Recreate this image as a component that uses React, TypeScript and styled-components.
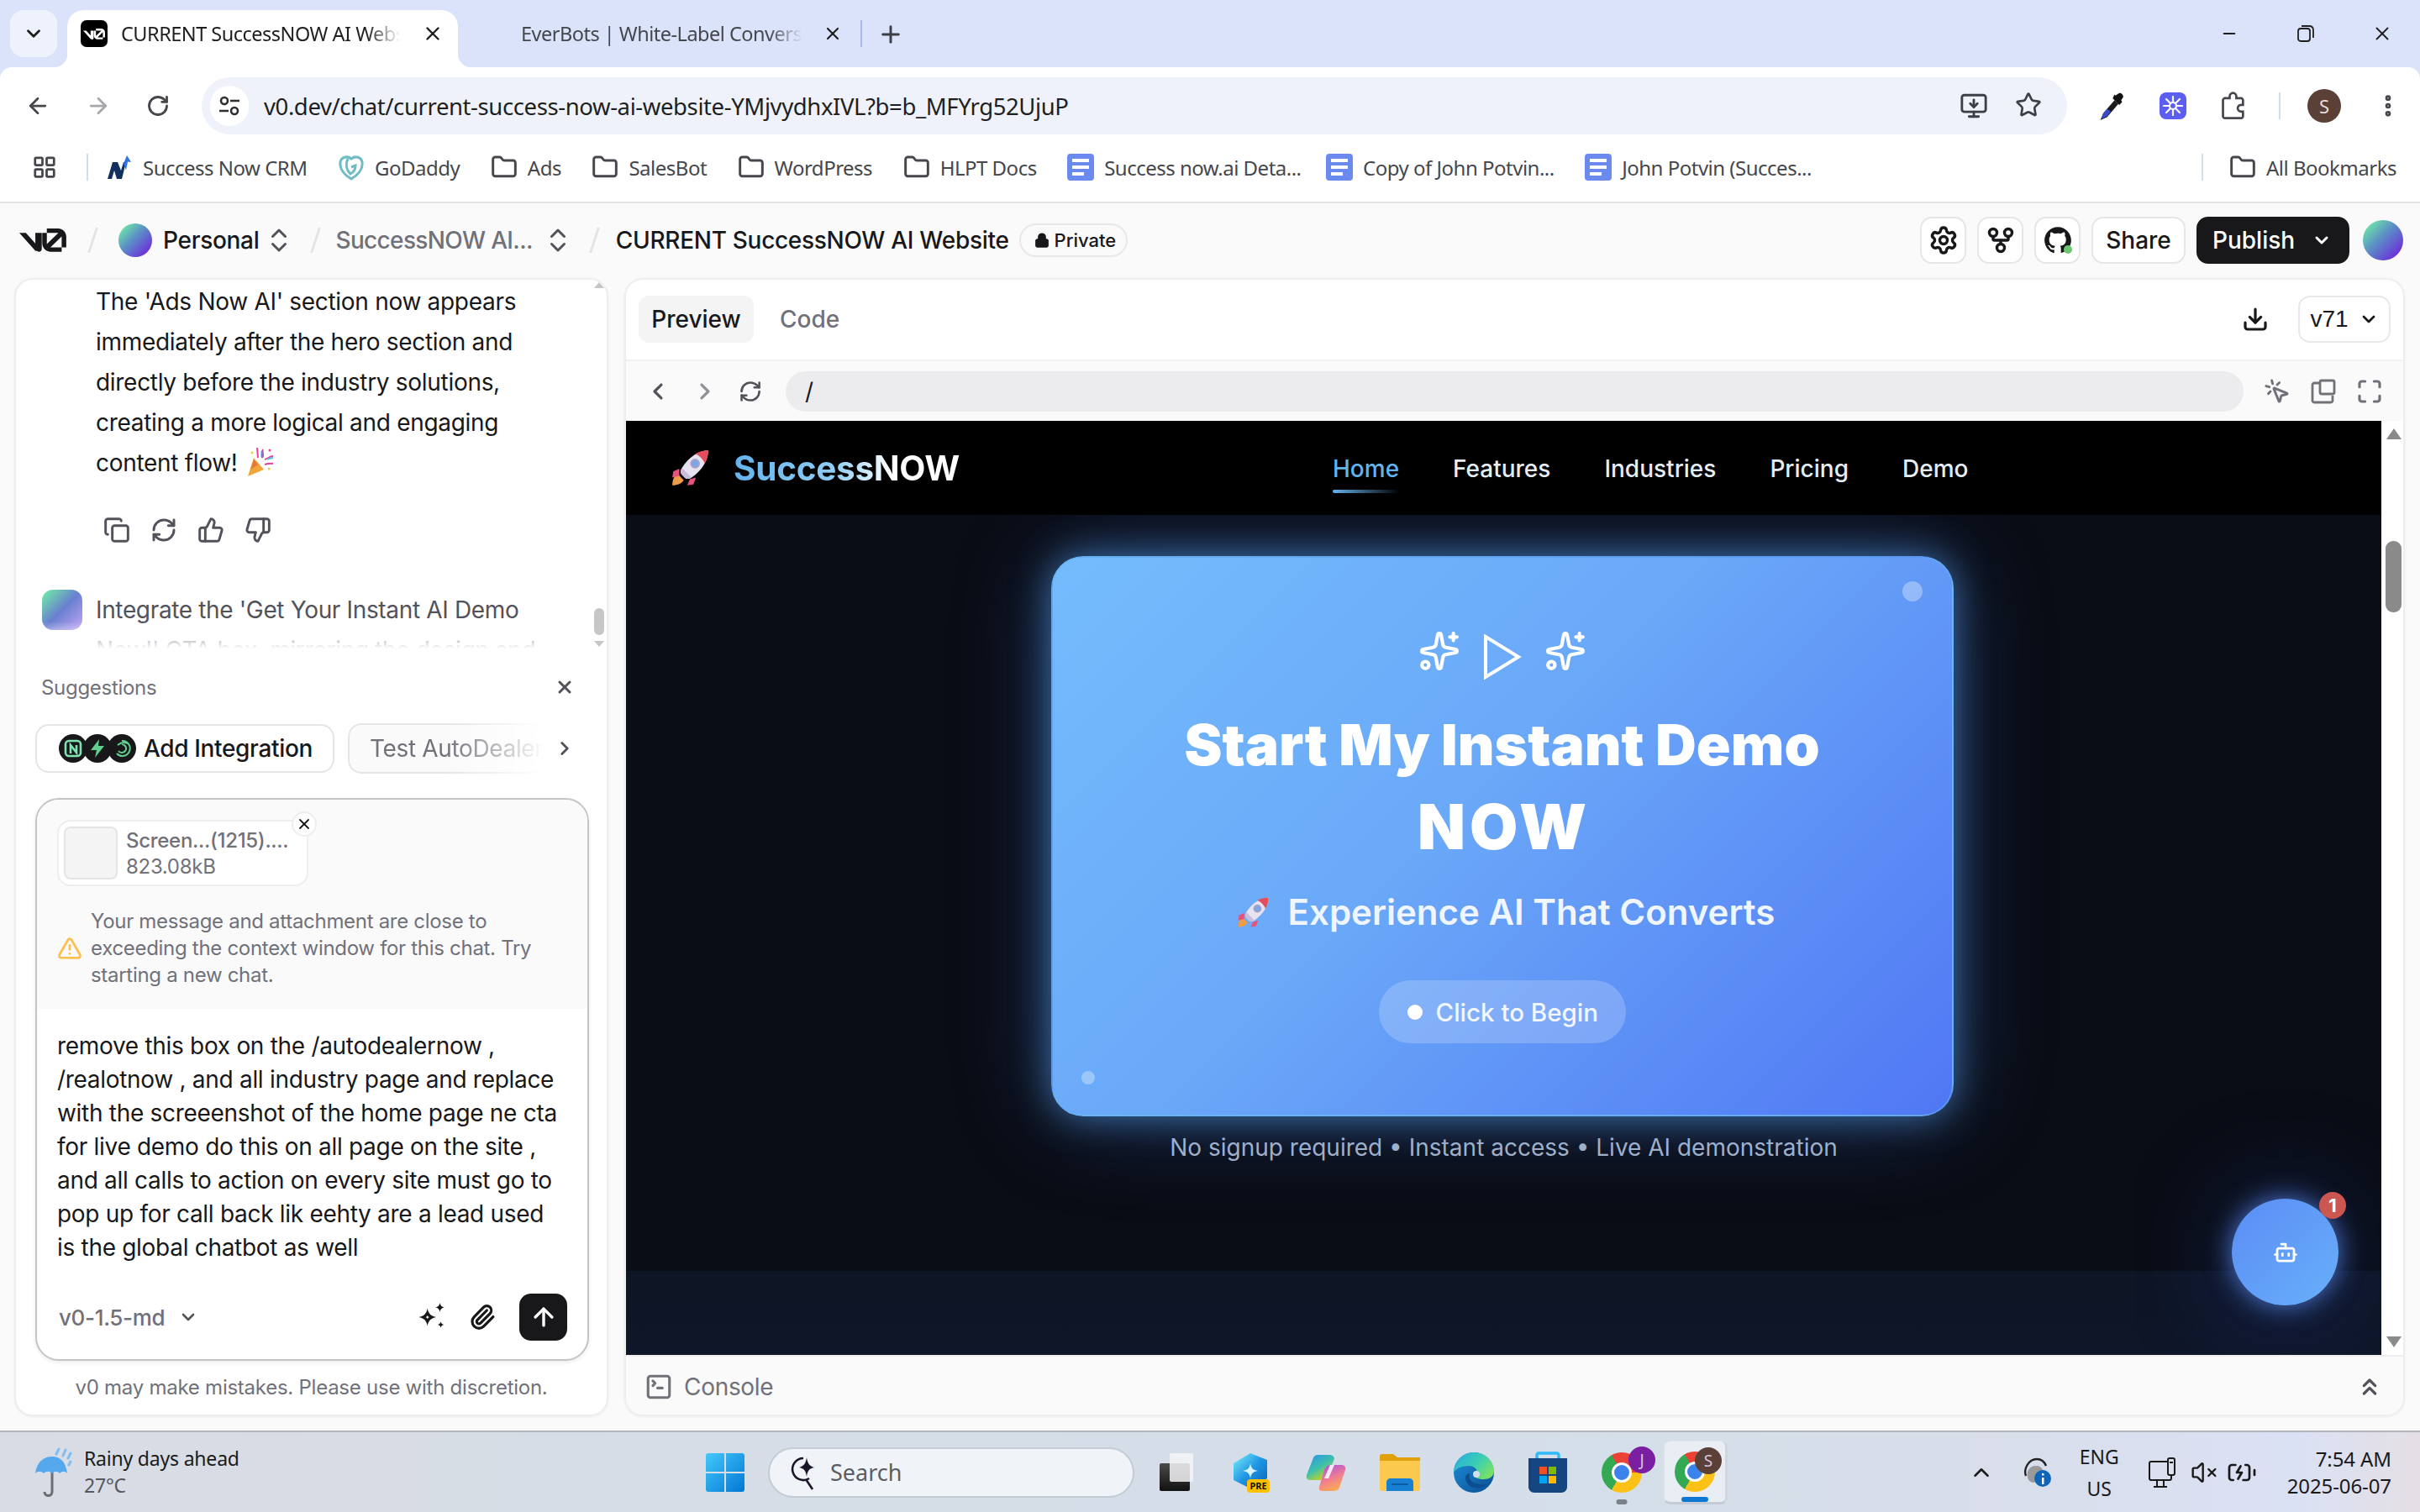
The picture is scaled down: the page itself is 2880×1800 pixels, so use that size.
import React from "react";
import styled, { createGlobalStyle } from "styled-components";
import {
  ArrowLeft, ArrowRight, ArrowUp, BatteryCharging, Bot, ChevronDown, ChevronLeft, ChevronRight, ChevronUp,
  ChevronsUp, ChevronsUpDown, Copy, Download, EllipsisVertical, Folder, GitFork, LayoutGrid, Lock, Maximize,
  Minus, MonitorDown, MousePointerClick, Paperclip, Plus, RefreshCw, RotateCw, Settings,
  Sparkles, SquareTerminal, Star, ThumbsDown, ThumbsUp, TriangleAlert, VolumeX, X,
} from "lucide-react";

const Global = createGlobalStyle`
  html, body { margin: 0; padding: 0; width: 2880px; height: 1800px; overflow: hidden; background: #fafafa; }
  * { box-sizing: border-box; }
  #root { width: 2880px; height: 1800px; }
`;

const WIN = `"Noto Sans", "Open Sans", sans-serif`;
const UI = `Inter, "Noto Sans", sans-serif`;

const Page = styled.div`
  width: 2880px;
  height: 1800px;
  display: grid;
  grid-template-rows: 80px 80px 82px 1461px 97px;
  background: #dbe3fb;
  font-family: ${UI};
  overflow: hidden;
`;

/* ---------- browser tab strip ---------- */
const TabStrip = styled.div`
  display: flex;
  align-items: flex-end;
  padding-left: 12px;
  font-family: ${WIN};
`;
const TabSearch = styled.div`
  width: 56px;
  height: 56px;
  margin-bottom: 12px;
  margin-right: 12px;
  border-radius: 16px;
  background: #eef2fd;
  display: flex;
  align-items: center;
  justify-content: center;
  color: #1f1f1f;
`;
const ActiveTab = styled.div`
  position: relative;
  width: 465px;
  height: 68px;
  padding: 0 20px 12px 16px;
  background: #fff;
  border-radius: 20px 20px 0 0;
  display: flex;
  align-items: center;
  gap: 16px;
  &::before, &::after {
    content: "";
    position: absolute;
    bottom: 0;
    width: 16px;
    height: 16px;
  }
  &::before { left: -16px; background: radial-gradient(circle at 0 0, transparent 16px, #fff 16.5px); }
  &::after { right: -16px; background: radial-gradient(circle at 100% 0, transparent 16px, #fff 16.5px); }
`;
const Favicon = styled.div`
  width: 32px;
  height: 32px;
  flex: none;
  border-radius: 7px;
  background: #000;
  display: flex;
  align-items: center;
  justify-content: center;
`;
const TabTitle = styled.div<{ $w: number; $muted?: boolean }>`
  width: ${(p) => p.$w}px;
  flex: none;
  overflow: hidden;
  white-space: nowrap;
  font-size: 23.5px;
  letter-spacing: -0.5px;
  color: ${(p) => (p.$muted ? "#45474d" : "#1f1f1f")};
  mask-image: linear-gradient(90deg, #000 88%, transparent 100%);
`;
const TabClose = styled.div`
  display: flex;
  color: #1f1f1f;
  margin-left: 10px;
`;
const PlainTab = styled.div`
  display: flex;
  align-items: center;
  gap: 14px;
  height: 68px;
  padding: 0 0 12px 75px;
`;
const TabDivider = styled.div`
  width: 2px;
  height: 32px;
  margin: 0 0 24px 21px;
  align-self: flex-end;
  background: #a9b8e6;
`;
const NewTab = styled.div`
  margin: 0 0 23px 18px;
  display: flex;
  color: #3c3f46;
`;
const WindowControls = styled.div`
  margin-left: auto;
  height: 80px;
  display: flex;
  align-items: center;
  color: #1f1f1f;
`;
const WindowButton = styled.div`
  width: 91px;
  display: flex;
  justify-content: center;
  align-items: center;
`;

/* ---------- browser toolbar ---------- */
const Toolbar = styled.div`
  background: #fff;
  border-radius: 14px 14px 0 0;
  display: flex;
  align-items: center;
  padding: 12px 0 0 30px;
  color: #45474d;
  font-family: ${WIN};
`;
const NavButton = styled.div<{ $faint?: boolean }>`
  width: 72px;
  display: flex;
  justify-content: flex-start;
  color: ${(p) => (p.$faint ? "#a5a7ab" : "#45474d")};
`;
const Omnibox = styled.div`
  width: 2220px;
  height: 68px;
  margin-left: -6px;
  border-radius: 34px;
  background: #eff2fa;
  display: flex;
  align-items: center;
  padding: 0 30px 0 10px;
`;
const SiteInfo = styled.div`
  width: 46px;
  height: 48px;
  border-radius: 24px;
  background: #fff;
  display: flex;
  align-items: center;
  justify-content: center;
`;
const UrlText = styled.div`
  margin-left: 18px;
  font-size: 27.5px;
  letter-spacing: -0.4px;
  color: #1f1f1f;
  white-space: nowrap;
`;
const OmniIcons = styled.div`
  margin-left: auto;
  display: flex;
  gap: 32px;
  color: #3c3f46;
`;
const ExtensionRow = styled.div`
  display: flex;
  align-items: center;
  margin-left: 34px;
  gap: 40px;
`;
const ToolbarDivider = styled.div`
  width: 2px;
  height: 32px;
  margin: 0 -8px 0 -2px;
  background: #d3dcf5;
`;
const ProfileBadge = styled.div`
  width: 40px;
  height: 40px;
  border-radius: 50%;
  background: #5b4037;
  color: #e9ddd8;
  display: flex;
  align-items: center;
  justify-content: center;
  font-size: 22px;
`;
const SnowTile = styled.div`
  width: 32px;
  height: 32px;
  border-radius: 8px;
  background: #5b5ef0;
  display: flex;
  align-items: center;
  justify-content: center;
`;

/* ---------- bookmarks ---------- */
const Bookmarks = styled.div`
  background: #fff;
  border-bottom: 2px solid #e3e3e3;
  display: flex;
  align-items: center;
  padding: 0 0 2px 38px;
  gap: 36.5px;
  font-family: ${WIN};
  font-size: 24px;
  letter-spacing: -0.5px;
  color: #45474d;
`;
const BookmarkDivider = styled.div<{ $push?: boolean }>`
  width: 2px;
  height: 32px;
  margin: ${(p) => (p.$push ? "0 -6px 0 auto" : "0 -15px 0 -2px")};
  background: #d3dcf5;
`;
const Bookmark = styled.div<{ $end?: boolean; $trim?: boolean }>`
  display: flex;
  align-items: center;
  gap: 12px;
  white-space: nowrap;
  margin-right: ${(p) => (p.$end ? "28px" : p.$trim ? "-7px" : "0")};
`;
const DocTile = styled.div`
  width: 32px;
  height: 32px;
  border-radius: 4px;
  background: #6a8af0;
  padding: 6px 6px;
  display: flex;
  flex-direction: column;
  justify-content: space-between;
  i { display: block; height: 4px; background: #fff; }
  i:last-child { width: 70%; }
`;

/* ---------- app shell ---------- */
const Shell = styled.div`
  background: #fafafa;
  display: flex;
  flex-direction: column;
`;
const Header = styled.div`
  height: 88px;
  flex: none;
  display: flex;
  align-items: center;
  padding: 0 20px 0 23px;
`;
const Crumb = styled.div<{ $muted?: boolean }>`
  font-size: 28px;
  font-weight: 500;
  letter-spacing: ${(p) => (p.$muted ? "-0.65px" : "-0.3px")};
  white-space: nowrap;
  color: ${(p) => (p.$muted ? "#71717a" : "#18181b")};
`;
const Slash = styled.div<{ $after: number }>`
  width: 3px;
  height: 30px;
  margin: 0 ${(p) => p.$after}px 0 30px;
  background: #e4e4e7;
  transform: skewX(-18deg);
`;
const OrbAvatar = styled.div<{ $size: number }>`
  width: ${(p) => p.$size}px;
  height: ${(p) => p.$size}px;
  flex: none;
  border-radius: 50%;
  background: linear-gradient(135deg, #6ee7a8 10%, #5b8fc7 45%, #6d28d9 90%);
`;
const UpDown = styled(ChevronsUpDown)<{ $gap: number }>`
  flex: none;
  margin: 0 -6px 0 ${(p) => p.$gap}px;
`;
const PersonalCrumb = styled(Crumb)`
  margin-left: 13px;
`;
const PrivateBadge = styled.div`
  height: 40px;
  margin-left: 12px;
  padding: 0 12px 0 16px;
  border: 2px solid #e8e8e8;
  border-radius: 20px;
  display: flex;
  align-items: center;
  gap: 6px;
  font-size: 22px;
  font-weight: 500;
  color: #18181b;
`;
const HeaderActions = styled.div`
  margin-left: auto;
  display: flex;
  align-items: center;
  gap: 13px;
`;
const IconBtn = styled.div`
  position: relative;
  width: 55px;
  height: 56px;
  border: 2px solid #e6e6e6;
  border-radius: 14px;
  background: #fff;
  display: flex;
  align-items: center;
  justify-content: center;
  color: #18181b;
`;
const OnlineDot = styled.span`
  position: absolute;
  right: 8px;
  bottom: 10px;
  width: 10px;
  height: 10px;
  border-radius: 50%;
  background: #6cc76e;
`;
const TextBtn = styled(IconBtn)`
  width: 112px;
  font-size: 28px;
  font-weight: 500;
`;
const PublishBtn = styled.div`
  width: 182px;
  height: 56px;
  margin-right: 3px;
  border-radius: 14px;
  background: #18181b;
  color: #fff;
  display: flex;
  align-items: center;
  padding-left: 19px;
  gap: 20px;
  font-size: 28px;
  font-weight: 500;
`;
const Workspace = styled.div`
  flex: 1;
  min-height: 0;
  display: grid;
  grid-template-columns: 707px 2119px;
  gap: 19px;
  padding: 1px 0 17px 17px;
`;

/* ---------- chat ---------- */
const ChatPanel = styled.div`
  background: #fff;
  border: 2px solid #eeeeee;
  border-radius: 22px;
  box-shadow: 0 1px 3px rgba(0, 0, 0, 0.06);
  display: flex;
  flex-direction: column;
  overflow: hidden;
`;
const ChatScroll = styled.div`
  position: relative;
  height: 443px;
  flex: none;
  overflow: hidden;
  &::after {
    content: "";
    position: absolute;
    left: 0;
    right: 0;
    bottom: 0;
    height: 36px;
    background: linear-gradient(180deg, rgba(255, 255, 255, 0), #fff 90%);
  }
`;
const AssistantText = styled.div`
  padding: 2px 0 0 95px;
  font-size: 28px;
  line-height: 48px;
  letter-spacing: -0.3px;
  color: #18181b;
  white-space: nowrap;
`;
const TextLine = styled.div`
  display: block;
`;
const ActionRow = styled.div`
  margin: 40px 0 0 104px;
  display: flex;
  gap: 24px;
  color: #52525b;
`;
const UserRow = styled.div`
  display: flex;
  gap: 16px;
  margin: 55px 0 0 31px;
  font-size: 28px;
  line-height: 48px;
  letter-spacing: -0.35px;
  color: #52525b;
  white-space: nowrap;
`;
const UserAvatar = styled.div`
  width: 48px;
  height: 48px;
  flex: none;
  border-radius: 13px;
  background: linear-gradient(135deg, #6ee7a8 5%, #6a7fd0 50%, #c4a8f5 100%);
`;
const ScrollRail = styled.div`
  position: absolute;
  top: 0;
  right: 2px;
  width: 14px;
  height: 100%;
  z-index: 2;
`;
const RailThumb = styled.div`
  position: absolute;
  left: 1px;
  top: 391px;
  width: 12px;
  height: 32px;
  border-radius: 6px;
  background: #c6c6c6;
`;
const RailArrow = styled.div<{ $down?: boolean; $top: number }>`
  position: absolute;
  top: ${(p) => p.$top}px;
  left: 1px;
  width: 0;
  height: 0;
  border-left: 6px solid transparent;
  border-right: 6px solid transparent;
  ${(p) => (p.$down ? "border-top: 7px solid #c6c6c6;" : "border-bottom: 7px solid #c6c6c6;")}
`;
const SuggestHead = styled.div`
  height: 30px;
  margin-top: 27px;
  flex: none;
  padding: 0 38px 0 30px;
  display: flex;
  align-items: center;
  justify-content: space-between;
  font-size: 24px;
  letter-spacing: -0.3px;
  color: #71717a;
`;
const ChipRow = styled.div`
  margin: 28px 0 0 23px;
  display: flex;
  align-items: center;
  gap: 16px;
  position: relative;
  flex: none;
`;
const ChipPrimary = styled.div`
  width: 356px;
  height: 58px;
  flex: none;
  border: 2px solid #e5e5e5;
  border-radius: 16px;
  display: flex;
  align-items: center;
  padding-left: 26px;
  gap: 9px;
  font-size: 28px;
  font-weight: 500;
  letter-spacing: -0.35px;
  color: #18181b;
  white-space: nowrap;
`;
const IntegrationStack = styled.div`
  display: flex;
  div + div { margin-left: -5px; }
`;
const IntegrationDot = styled.div`
  width: 34px;
  height: 34px;
  border-radius: 50%;
  background: #18181b;
  display: flex;
  align-items: center;
  justify-content: center;
`;
const ChipFaded = styled.div`
  width: 234px;
  height: 60px;
  flex: none;
  border: 2px solid #e5e5e5;
  border-radius: 16px;
  background: #fafafa;
  padding-left: 24px;
  display: flex;
  align-items: center;
  overflow: hidden;
  font-size: 28px;
  letter-spacing: -0.35px;
  color: #71717a;
  white-space: nowrap;
  mask-image: linear-gradient(90deg, #000 50%, transparent 100%);
`;
const ChipNext = styled.div`
  display: flex;
  margin-left: -5px;
  color: #52525b;
`;
const Composer = styled.div`
  margin: 29px 0 0 23px;
  width: 659px;
  height: 670px;
  flex: none;
  border: 2px solid #c4c4c4;
  border-radius: 28px;
  box-shadow: 0 2px 5px rgba(0, 0, 0, 0.08);
  display: flex;
  flex-direction: column;
  overflow: hidden;
`;
const ComposerTop = styled.div`
  background: #fafafa;
  height: 249px;
  flex: none;
  padding: 24px 24px;
`;
const AttachChip = styled.div`
  position: relative;
  width: 299px;
  height: 79px;
  background: #fff;
  border: 2px solid #eeeeee;
  border-radius: 16px;
  display: flex;
  align-items: center;
  padding-left: 6px;
  gap: 10px;
`;
const Thumb = styled.div`
  width: 64px;
  height: 63px;
  flex: none;
  border: 2px solid #e4e4e7;
  border-radius: 8px;
  background: #f4f4f5;
`;
const AttachText = styled.div`
  font-size: 24px;
  line-height: 31px;
  letter-spacing: -0.3px;
  color: #71717a;
  white-space: nowrap;
`;
const AttachName = styled.div`
  font-weight: 500;
`;
const AttachClose = styled.div`
  position: absolute;
  top: -12px;
  right: -12px;
  width: 30px;
  height: 30px;
  border: 2px solid #eeeeee;
  border-radius: 50%;
  background: #fff;
  display: flex;
  align-items: center;
  justify-content: center;
  color: #18181b;
`;
const Warning = styled.div`
  margin-top: 26px;
  display: flex;
  align-items: center;
  gap: 10px;
  color: #fdbf4f;
`;
const WarningText = styled.div`
  font-size: 24px;
  line-height: 32px;
  letter-spacing: -0.3px;
  color: #71717a;
  white-space: nowrap;
`;
const PromptText = styled.div`
  padding: 24px 24px 0;
  font-size: 28px;
  line-height: 40px;
  letter-spacing: -0.3px;
  color: #18181b;
  white-space: nowrap;
  height: 319px;
  flex: none;
`;
const ComposerBar = styled.div`
  padding: 20px 24px 0 26px;
  display: flex;
  align-items: center;
`;
const ModelName = styled.div`
  font-size: 26px;
  font-weight: 500;
  letter-spacing: -0.35px;
  color: #71717a;
  margin-right: 16px;
`;
const ComposerTools = styled.div`
  margin-left: auto;
  display: flex;
  align-items: center;
  gap: 25px;
  color: #18181b;
`;
const SendBtn = styled.div`
  width: 57px;
  height: 56px;
  margin-left: 3px;
  border-radius: 14px;
  background: #18181b;
  color: #fff;
  display: flex;
  align-items: center;
  justify-content: center;
`;
const Disclaimer = styled.div`
  flex: 1;
  display: flex;
  align-items: center;
  justify-content: center;
  font-size: 24px;
  letter-spacing: -0.25px;
  color: #71717a;
  padding-bottom: 1px;
`;

/* ---------- preview panel ---------- */
const PreviewPanel = styled.div`
  background: #fff;
  border: 2px solid #eeeeee;
  border-radius: 22px;
  box-shadow: 0 1px 3px rgba(0, 0, 0, 0.06);
  display: flex;
  flex-direction: column;
  overflow: hidden;
`;
const PreviewTabs = styled.div`
  height: 97px;
  flex: none;
  padding: 0 15px 2px 15px;
  border-bottom: 2px solid #f2f2f2;
  display: flex;
  align-items: center;
  gap: 31px;
  font-size: 28px;
  font-weight: 500;
`;
const PillTab = styled.div`
  width: 137px;
  height: 56px;
  border-radius: 12px;
  background: #f4f4f5;
  color: #18181b;
  display: flex;
  align-items: center;
  justify-content: center;
`;
const QuietTab = styled.div`
  color: #71717a;
`;
const PreviewTools = styled.div`
  margin-left: auto;
  display: flex;
  align-items: center;
  gap: 35px;
  color: #18181b;
`;
const VersionBtn = styled.div`
  width: 110px;
  height: 56px;
  border: 2px solid #e8e8e8;
  border-radius: 14px;
  display: flex;
  align-items: center;
  justify-content: center;
  gap: 12px;
  font-size: 28px;
  font-family: "Liberation Sans", sans-serif;
`;
const AddressRow = styled.div`
  height: 71px;
  flex: none;
  background: #fafafa;
  display: flex;
  align-items: center;
  padding: 0 24px 0 22px;
  gap: 28px;
  color: #71717a;
`;
const AddressNav = styled.div`
  display: flex;
  gap: 24px;
  width: 140px;
  flex: none;
  color: #52525b;
  align-items: center;
`;
const AddressField = styled.div`
  flex: 1;
  height: 48px;
  border-radius: 24px;
  background: #ececee;
  padding-left: 23px;
  display: flex;
  align-items: center;
  font-size: 28px;
  color: #18181b;
`;
const AddressTools = styled.div`
  display: flex;
  align-items: center;
  gap: 24px;
  margin-left: -4px;
`;
const ViewportRow = styled.div`
  height: 1112px;
  flex: none;
  display: flex;
`;
const Viewport = styled.div`
  position: relative;
  width: 2089px;
  flex: none;
  overflow: hidden;
  background: #0b0e16;
`;
const PageScrollbar = styled.div`
  position: relative;
  flex: 1;
  background: #fff;
`;
const PageThumb = styled.div`
  position: absolute;
  left: 5px;
  top: 143px;
  width: 19px;
  height: 85px;
  border-radius: 9px;
  background: #8a8a8a;
`;
const PageArrow = styled.div<{ $down?: boolean }>`
  position: absolute;
  left: 6px;
  ${(p) => (p.$down ? "bottom: 9px;" : "top: 9px;")}
  width: 0;
  height: 0;
  border-left: 9px solid transparent;
  border-right: 9px solid transparent;
  ${(p) => (p.$down ? "border-top: 13px solid #8a8a8a;" : "border-bottom: 13px solid #8a8a8a;")}
`;
const SiteNav = styled.div`
  position: relative;
  z-index: 2;
  height: 112px;
  background: #000;
  display: flex;
  align-items: center;
  padding: 0 0 0 52px;
`;
const SiteLogo = styled.div`
  margin-left: 26px;
  font-size: 40.5px;
  font-weight: 700;
  letter-spacing: -0.3px;
  background: linear-gradient(90deg, #63b3ed 0%, #90cdf4 45%, #ffffff 70%);
  -webkit-background-clip: text;
  background-clip: text;
  color: transparent;
`;
const SiteLinks = styled.div`
  margin-left: 444px;
  padding-top: 2px;
  display: flex;
  gap: 64px;
  font-size: 28px;
  font-weight: 500;
  color: #e6edf5;
`;
const SiteLink = styled.div<{ $current?: boolean }>`
  position: relative;
  color: ${(p) => (p.$current ? "#63b3ed" : "#e6edf5")};
  ${(p) =>
    p.$current
      ? `&::after {
    content: "";
    position: absolute;
    left: 0;
    right: 0;
    bottom: -12px;
    height: 4px;
    border-radius: 2px;
    background: linear-gradient(90deg, #63b3ed, rgba(99, 179, 237, 0));
  }`
      : ""}
`;
const HeroSection = styled.div`
  height: 900px;
  background: #0a0d15;
  padding-top: 49px;
  display: flex;
  flex-direction: column;
  align-items: center;
`;
const HeroCard = styled.div`
  position: relative;
  width: 1074px;
  height: 667px;
  flex: none;
  transform: translateX(-2px);
  border-radius: 38px;
  border: 2px solid rgba(99, 179, 237, 0.55);
  background: linear-gradient(135deg, #74bcfc 0%, #6aa8f8 45%, #5077f4 100%);
  box-shadow: 0 0 45px rgba(90, 170, 245, 0.62), 0 0 120px rgba(66, 120, 240, 0.3);
  padding-top: 78px;
  display: flex;
  flex-direction: column;
  align-items: center;
  color: #fff;
`;
const CardDot = styled.div<{ $size: number; $corner: "tr" | "bl" }>`
  position: absolute;
  width: ${(p) => p.$size}px;
  height: ${(p) => p.$size}px;
  border-radius: 50%;
  background: rgba(255, 255, 255, 0.33);
  ${(p) => (p.$corner === "tr" ? "top: 28px; right: 35px;" : "bottom: 36px; left: 34px;")}
`;
const HeroIcons = styled.div`
  display: flex;
  align-items: center;
  gap: 27px;
  height: 65px;
`;
const HeroPlayMark = styled.svg`
  margin-top: 14px;
`;
const HeroTitle = styled.div`
  margin-top: 31px;
  font-size: 67.5px;
  font-weight: 900;
  line-height: 97.5px;
  text-align: center;
  white-space: nowrap;
`;
const TitleAccent = styled.div`
  font-size: 74px;
  letter-spacing: 5px;
  padding-left: 5px;
`;
const HeroSub = styled.div`
  margin: 23px 0 0 8px;
  display: flex;
  align-items: center;
  gap: 20px;
  font-size: 42px;
  font-weight: 600;
  line-height: 60px;
  color: #f0f6ff;
`;
const HeroBtn = styled.div`
  margin-top: 51px;
  width: 294px;
  height: 75px;
  border-radius: 38px;
  background: rgba(255, 255, 255, 0.2);
  display: flex;
  align-items: center;
  padding-left: 34px;
  gap: 16px;
  font-size: 29.5px;
  font-weight: 500;
  color: #f3f7ff;
`;
const HeroBtnDot = styled.div`
  width: 18px;
  height: 18px;
  border-radius: 50%;
  background: #fff;
`;
const HeroCaption = styled.div`
  margin-top: 19px;
  font-size: 28px;
  line-height: 36px;
  color: #a9b6c8;
  white-space: nowrap;
`;
const LowerSection = styled.div`
  height: 100px;
  background: linear-gradient(180deg, #0e1524, #0f1629);
`;
const ChatFab = styled.div`
  position: absolute;
  left: 1911px;
  top: 926px;
  width: 127px;
  height: 127px;
  border-radius: 50%;
  background: linear-gradient(135deg, #5b8cf5, #68b0fa);
  box-shadow: 0 0 30px rgba(90, 140, 245, 0.85), 0 0 130px rgba(50, 90, 230, 0.35);
  display: flex;
  align-items: center;
  justify-content: center;
  color: #fff;
`;
const FabBadge = styled.div`
  position: absolute;
  top: -8px;
  right: -9px;
  width: 32px;
  height: 32px;
  border-radius: 50%;
  background: #cc5650;
  color: #fff;
  font-size: 22px;
  font-weight: 700;
  display: flex;
  align-items: center;
  justify-content: center;
`;
const ConsoleBar = styled.div`
  flex: 1;
  border-top: 2px solid #eeeeee;
  background: #fafafa;
  display: flex;
  align-items: center;
  gap: 13px;
  padding: 2px 24px 0 22px;
  font-size: 28px;
  letter-spacing: -0.3px;
  color: #71717a;
`;
const ConsoleExpand = styled.div`
  margin-left: auto;
  display: flex;
  color: #52525b;
`;

/* ---------- windows taskbar ---------- */
const Taskbar = styled.div`
  border-top: 2px solid #b2b6bc;
  background: linear-gradient(90deg, #d9dce4 0%, #d5dee8 45%, #d5dfe9 68%, #d9deea 82%, #dbe1f4 95%, #e4dfe4 100%);
  display: flex;
  align-items: center;
  font-family: ${WIN};
  position: relative;
`;
const Weather = styled.div`
  width: 840px;
  flex: none;
  display: flex;
  align-items: center;
  padding-left: 40px;
  gap: 14px;
`;
const WeatherText = styled.div`
  font-size: 23px;
  line-height: 32px;
  letter-spacing: -0.2px;
  color: #1a1a1a;
  margin-top: -2px;
  div + div { color: #55585e; }
`;
const SearchBox = styled.div`
  width: 436px;
  height: 60px;
  margin-left: 28px;
  border: 2px solid #c4ccd6;
  border-radius: 30px;
  background: #f0f4f9;
  display: flex;
  align-items: center;
  padding-left: 20px;
  gap: 14px;
  font-size: 27px;
  color: #5b5d62;
`;
const TaskView = styled.div`
  width: 40px;
  margin: 0 26px 0 30px;
  display: flex;
`;
const TaskSlot = styled.div<{ $active?: boolean }>`
  position: relative;
  width: ${(p) => (p.$active ? "76px" : "88px")};
  height: 76px;
  margin-left: ${(p) => (p.$active ? "6px" : "0")};
  flex: none;
  display: flex;
  align-items: center;
  justify-content: center;
  border-radius: 8px;
  ${(p) => (p.$active ? "background: #e9edf4; border: 1px solid #dfe3ea; border-bottom: 3px solid #c5cbd6; border-right: 3px solid #d0d5df;" : "")}
`;
const RunPip = styled.span<{ $active?: boolean }>`
  position: absolute;
  left: 50%;
  bottom: 0;
  transform: translateX(-50%);
  width: ${(p) => (p.$active ? "32px" : "13px")};
  height: 6px;
  border-radius: 3px;
  background: ${(p) => (p.$active ? "#0f78d4" : "#7b808a")};
`;
const ChromeLogo = styled.div`
  position: relative;
  width: 48px;
  height: 48px;
  border-radius: 50%;
  background: conic-gradient(#ea4335 0 90deg, #fbc116 90deg 210deg, #34a853 210deg 330deg, #ea4335 330deg);
  &::after {
    content: "";
    position: absolute;
    inset: 12px;
    border-radius: 50%;
    background: #3b82ea;
    border: 3px solid #fff;
  }
`;
const ProfilePip = styled.div<{ $bg: string }>`
  position: absolute;
  top: 7px;
  right: 4px;
  width: 32px;
  height: 32px;
  border-radius: 50%;
  background: ${(p) => p.$bg};
  color: #d6c6e0;
  font-size: 19px;
  display: flex;
  align-items: center;
  justify-content: center;
  z-index: 1;
`;
const Tray = styled.div`
  margin-left: auto;
  padding-right: 34px;
  display: flex;
  align-items: center;
  color: #1a1a1a;
`;
const TrayIcon = styled.div<{ $ml: number }>`
  display: flex;
  margin-left: ${(p) => p.$ml}px;
`;
const TrayLang = styled.div`
  margin-left: 34px;
  font-size: 23px;
  line-height: 38px;
  text-align: center;
`;
const TrayClock = styled.div`
  margin-left: 36px;
  font-size: 24px;
  line-height: 32px;
  letter-spacing: -0.1px;
  text-align: right;
`;

/* ---------- drawings ---------- */
const V0Logo = ({ w, color = "#18181b" }: { w: number; color?: string }) => (
  <svg width={w} viewBox="0 0 40 20" fill={color}>
    <path d="M23.39 0h9.53c3.86 0 6.99 3.13 6.99 7v9.08H36V7c0-.1 0-.19-.01-.28l-9.53 9.36h.1H36v3.7h-9.44c-3.86 0-7.08-3.16-7.08-7.03V3.69h3.91v9.06c0 .18.01.35.04.52l9.74-9.57c-.08-.01-.17-.01-.25-.01h-9.53V0z" />
    <path d="M13.77 19.1 0 3.69h5.54l8.08 9.05V3.69h5.45v13.88c0 2.1-2.52 3.09-3.96 1.53h-1.34z" />
  </svg>
);

const RocketIcon = ({ size }: { size: number }) => (
  <svg width={size} height={size} viewBox="0 0 48 48">
    <path d="M9 31c-4 2-6 7-6 13 6 0 11-2 13-6z" fill="#ee9b4a" />
    <path d="M11 25 4 28l-1 7 8-2z" fill="#e8517a" />
    <path d="M23 37l-3 7 7-1 3-8z" fill="#e8517a" />
    <path d="M44 4C34 4 22 11 14 24c-2 3-2 6 0 8l3 3c2 2 5 2 8 0C37 27 44 15 44 4z" fill="#e6e2f0" />
    <path d="M44 4c-5 0-10 1-15 4 4 1 9 6 11 11 3-5 4-10 4-15z" fill="#e34d5c" />
    <path d="M14 24c-2 3-2 6 0 8l3 3c2 2 5 2 8 0z" fill="#c8bedc" />
    <circle cx="29" cy="19" r="4.6" fill="#7ba6e8" stroke="#a8a3c4" strokeWidth="2" />
  </svg>
);

const PartyMark = styled.svg`
  margin-left: 12px;
  vertical-align: -6px;
`;
const PartyIcon = () => (
  <PartyMark width="30" height="34" viewBox="0 0 30 34">
    <path d="M0 34 7 12l12 14z" fill="#f0a53a" />
    <path d="M3 26l4-12 5 6z" fill="#e6793a" />
    <path d="M11 0l1 12M18 2c-2 3 2 6-1 10M30 10c-4 0-6 3-10 4M30 19c-4-1-7 0-10 1" stroke="#e83e9c" strokeWidth="2" fill="none" />
    <path d="M16 4c2 2-1 5 1 8" stroke="#4a90e8" strokeWidth="2" fill="none" />
    <path d="M23 14c3-2 5-1 7-2" stroke="#4fc3e8" strokeWidth="2" fill="none" />
    <circle cx="5" cy="6" r="1.5" fill="#f0c93a" />
    <circle cx="25" cy="25" r="1.5" fill="#f0c93a" />
    <circle cx="26" cy="3" r="1.5" fill="#e83e9c" />
  </PartyMark>
);

const NLogo = () => (
  <svg width="32" height="32" viewBox="0 0 32 32">
    <path d="M2 30 8 10h6l4 10 3-10h3l-5 20h-6L10 20 7 30z" fill="#12305e" />
    <path d="M21 12l4-10 5 8-4-.5-2 10z" fill="#2f6fe8" />
  </svg>
);
const HeartLogo = () => (
  <svg width="32" height="32" viewBox="0 0 32 32" fill="none" stroke="#6fbcc4" strokeWidth="3">
    <path d="M16 30C6 24 2 17 3 10c1-6 8-8 13-4 5-4 12-2 13 4 1 7-3 14-13 20z" />
    <path d="M12 6c-3 6-2 13 3 18 4-2 6-6 6-10l-5 2" />
  </svg>
);
const FolderIcon = () => <Folder size={32} strokeWidth={2.2} color="#45474d" />;

const PuzzleIcon = () => (
  <svg width="32" height="34" viewBox="0 0 28 30" fill="none" stroke="#45474d" strokeWidth="2.4">
    <path d="M5 7h5V5a3.5 3.5 0 0 1 7 0v2h5c1 0 2 1 2 2v5h-2a3.5 3.5 0 0 0 0 7h2v5c0 1-1 2-2 2H5c-1 0-2-1-2-2V9c0-1 1-2 2-2z" />
  </svg>
);

const GithubMark = () => (
  <svg width="34" height="34" viewBox="0 0 24 24" fill="#18181b">
    <path d="M12 .8C5.8.8.8 5.8.8 12c0 5 3.2 9.2 7.7 10.7.6.1.5-.3.5-.6v-2.2c-3.1.7-3.7-1.3-3.7-1.3-.5-1.3-1.2-1.6-1.2-1.6-1-.7.1-.7.1-.7 1.1.1 1.7 1.1 1.7 1.1 1 1.7 2.6 1.2 3.2.9.1-.7.4-1.2.7-1.5-2.5-.3-5.1-1.2-5.1-5.5 0-1.2.4-2.2 1.1-3-.1-.3-.5-1.4.1-2.9 0 0 .9-.3 3.1 1.1.9-.2 1.8-.4 2.8-.4s1.9.1 2.8.4c2.1-1.4 3.1-1.1 3.1-1.1.6 1.5.2 2.6.1 2.9.7.8 1.1 1.8 1.1 3 0 4.3-2.6 5.2-5.1 5.5.4.3.8 1 .8 2v3.1c0 .3-.1.7.6.6C20 21.2 23.2 17 23.2 12 23.2 5.8 18.2.8 12 .8z" />
  </svg>
);

const Dropper = () => (
  <svg width="36" height="36" viewBox="0 0 32 32">
    <path d="M20 10 8 24l-3 7 7-3L24 14z" fill="#1b1b1b" />
    <path d="M12 19l-4 5-2 6 6-3 4-5z" fill="#3a49c9" />
    <path d="M18 8l7 7 3-3-1-2 2-3c1-3-3-6-5-4l-3 2-1-1z" fill="#111" />
  </svg>
);

const Snow = () => (
  <svg width="24" height="24" viewBox="0 0 24 24" stroke="#fff" strokeWidth="2.2" strokeLinecap="round">
    <path d="M12 1v22M1 12h22M4 4l16 16M20 4 4 20" />
    <circle cx="12" cy="12" r="4" fill="#5b5ef0" />
  </svg>
);

const TuneIcon = () => (
  <svg width="28" height="28" viewBox="0 0 28 28" fill="none" stroke="#2f2f33" strokeWidth="2.6">
    <circle cx="8" cy="8" r="4" />
    <path d="M15 8h11M2 20h11" />
    <circle cx="20" cy="20" r="4" />
  </svg>
);

const RestoreIcon = () => (
  <svg width="22" height="22" viewBox="0 0 22 22" fill="none" stroke="#1f1f1f" strokeWidth="1.8">
    <rect x="2" y="5" width="14" height="15" rx="3" />
    <path d="M6 2h9c3 0 5 2 5 5v9" />
  </svg>
);

const DuplicateIcon = () => (
  <svg width="30" height="30" viewBox="0 0 30 30" fill="none" stroke="#71717a" strokeWidth="2.8">
    <path d="M10 5H4c-1 0-2 1-2 2v19c0 1 1 2 2 2h20c1 0 2-1 2-2v-6" />
    <rect x="11" y="2" width="17" height="16" rx="2" />
  </svg>
);

const HeroPlay = () => (
  <HeroPlayMark width="46" height="58" viewBox="0 0 46 58" fill="none" stroke="#fff" strokeWidth="4" strokeLinejoin="miter">
    <path d="M3 5v48l39-24z" />
  </HeroPlayMark>
);

const ConnectDots = () => (
  <svg width="26" height="26" viewBox="0 0 26 26" fill="none" stroke="#7fe3b0" strokeWidth="2.6">
    <rect x="4" y="4" width="18" height="18" rx="4" />
    <path d="M10 19V9l7 9V9" />
  </svg>
);
const BoltDot = () => (
  <svg width="24" height="24" viewBox="0 0 24 24" fill="#5fcf8e">
    <path d="M14 1 4 14h7l-2 9 11-14h-7z" />
  </svg>
);
const SpiralDot = () => (
  <svg width="24" height="24" viewBox="0 0 24 24" fill="none" stroke="#5fcf8e" strokeWidth="2">
    <path d="M12 3a9 9 0 1 1-6 15M12 7a5 5 0 1 1-4 8M19 6a12 12 0 0 0-12 2" />
  </svg>
);

const Sparkle = () => (
  <svg width="38" height="38" viewBox="0 0 36 36" fill="#18181b">
    <path d="M13 8c1 6 4 9 10 10-6 1-9 4-10 10-1-6-4-9-10-10 6-1 9-4 10-10zm0 8c-.5 1-1 1.5-2 2 1 .5 1.5 1 2 2 .5-1 1-1.5 2-2-1-.5-1.5-1-2-2z" fillRule="evenodd" />
    <path d="M27 2c.5 3 2 4.5 5 5-3 .5-4.5 2-5 5-.5-3-2-4.5-5-5 3-.5 4.5-2 5-5zM28 23c.4 2 1.5 3.1 3.5 3.5-2 .4-3.1 1.5-3.5 3.5-.4-2-1.5-3.1-3.5-3.5 2-.4 3.1-1.5 3.5-3.5z" />
  </svg>
);

const Umbrella = () => (
  <svg width="46" height="62" viewBox="0 0 46 62">
    <path d="M22 30v24c0 6-9 6-9 0" fill="none" stroke="#6a6d72" strokeWidth="3" />
    <path d="M2 32C4 18 12 12 22 12s16 6 18 20c-3-3-6-3-9 0-3-3-6-3-9 0-3-3-7-3-10 0-3-3-7-3-10 0z" fill="#55a7ee" />
    <path d="M30 3l-3 6M38 4l-3 7M44 8l-3 6M44 18l-2 4" stroke="#7fbdf2" strokeWidth="3" strokeLinecap="round" />
  </svg>
);
const WinLogo = () => (
  <svg width="46" height="46" viewBox="0 0 46 46">
    <defs>
      <linearGradient id="winA" x1="0" y1="0" x2="1" y2="1">
        <stop offset="0" stopColor="#45c8fb" />
        <stop offset="1" stopColor="#0078d4" />
      </linearGradient>
    </defs>
    <path d="M0 3a3 3 0 0 1 3-3h19v22H0zM24 0h19a3 3 0 0 1 3 3v19H24zM0 24h22v22H3a3 3 0 0 1-3-3zM24 24h22v19a3 3 0 0 1-3 3H24z" fill="url(#winA)" />
  </svg>
);
const SearchSpark = () => (
  <svg width="38" height="44" viewBox="0 0 38 44" fill="none" stroke="#1a1528" strokeWidth="2.6">
    <path d="M20 5a13 13 0 1 0 7 24" />
    <path d="M23 30l8 12" />
    <path d="M24 4c1 7 3 10 9 12-6 1-8 4-9 11-1-7-3-10-9-11 6-2 8-5 9-12z" fill="#1a1528" stroke="none" />
  </svg>
);
const TaskViewIcon = () => (
  <svg width="40" height="46" viewBox="0 0 40 46">
    <defs>
      <linearGradient id="tvA" x1="0" y1="0" x2="0" y2="1">
        <stop offset="0" stopColor="#4a4a4a" />
        <stop offset="1" stopColor="#111" />
      </linearGradient>
    </defs>
    <rect x="0" y="12" width="36" height="33" rx="2" fill="url(#tvA)" />
    <rect x="12" y="0" width="28" height="34" rx="2" fill="#f4f5f7" opacity="0.85" />
  </svg>
);
const CopilotPre = () => (
  <svg width="52" height="50" viewBox="0 0 52 50">
    <defs>
      <linearGradient id="cpA" x1="0" y1="0" x2="1" y2="1">
        <stop offset="0" stopColor="#7cf2fb" />
        <stop offset="0.5" stopColor="#1f96e4" />
        <stop offset="1" stopColor="#0a62b8" />
      </linearGradient>
    </defs>
    <path d="M24 2 44 10v22L24 44 4 34V14z" fill="url(#cpA)" />
    <path d="M24 14c1 6 3 8 9 9-6 1-8 3-9 9-1-6-3-8-9-9 6-1 8-3 9-9z" fill="#d9f4ff" />
    <rect x="20" y="33" width="27" height="16" rx="4" fill="#ffc000" />
    <text x="33.5" y="45" fontSize="11" fontWeight="700" textAnchor="middle" fontFamily="Noto Sans" fill="#111">PRE</text>
  </svg>
);
const CopilotIcon = () => (
  <svg width="48" height="46" viewBox="0 0 48 46">
    <defs>
      <linearGradient id="coA" x1="0" y1="0" x2="0.6" y2="1">
        <stop offset="0" stopColor="#2b8fef" />
        <stop offset="0.55" stopColor="#3fc2a8" />
        <stop offset="1" stopColor="#e2d30e" />
      </linearGradient>
      <linearGradient id="coB" x1="0" y1="0" x2="0.4" y2="1">
        <stop offset="0" stopColor="#a24de8" />
        <stop offset="0.6" stopColor="#ef7d92" />
        <stop offset="1" stopColor="#f9a65a" />
      </linearGradient>
    </defs>
    <path d="M14 2h14c3 0 5 1 6 4l-8 24c-2 4-4 5-8 2H6c-4 0-6-2-5-6L8 8c1-4 3-6 6-6z" fill="url(#coA)" />
    <path d="M30 14h12c4 0 6 2 5 6l-6 18c-1 5-4 7-8 7H20c-3 0-5-2-4-5l6-20c2-4 4-6 8-6z" fill="url(#coB)" />
    <path d="M22 30l7-16 5 0-7 16z" fill="#fff" opacity=".85" />
  </svg>
);
const ExplorerIcon = () => (
  <svg width="48" height="44" viewBox="0 0 48 44">
    <path d="M0 3c0-2 1-3 3-3h13l5 4h27v34H0z" fill="#e0a10b" />
    <path d="M0 8h48v33c0 2-1 3-3 3H3c-2 0-3-1-3-3z" fill="#fcc94f" />
    <path d="M8 44V34c0-3 2-5 5-5h22c3 0 5 2 5 5v10z" fill="#1780d2" />
    <rect x="14" y="35" width="20" height="2" fill="#0a5da3" />
  </svg>
);
const EdgeIcon = () => (
  <svg width="48" height="48" viewBox="0 0 48 48">
    <defs>
      <linearGradient id="edA" x1="0" y1="0" x2="1" y2="0.6">
        <stop offset="0" stopColor="#28a8e8" />
        <stop offset="0.6" stopColor="#3bcfb2" />
        <stop offset="1" stopColor="#76e06a" />
      </linearGradient>
      <linearGradient id="edB" x1="0" y1="0" x2="1" y2="1">
        <stop offset="0" stopColor="#1e8fd8" />
        <stop offset="1" stopColor="#0c4d92" />
      </linearGradient>
    </defs>
    <circle cx="24" cy="24" r="24" fill="url(#edB)" />
    <path d="M0 24C2 9 12 0 24 0c14 0 24 11 24 22 0 7-6 10-12 10-7 0-11-2-11-4 0-1 3-1 3-4 0-5-5-8-10-8C10 16 3 19 0 24z" fill="url(#edA)" />
    <path d="M14 30c0 8 8 14 18 12 4-1 6-3 7-4-6 1-14 0-18-4-2-2-3-5-2-8 1-2-5 0-5 4z" fill="#0c4d92" />
    <circle cx="27" cy="26" r="4" fill="#d5dfe9" />
  </svg>
);
const StoreIcon = () => (
  <svg width="46" height="50" viewBox="0 0 46 50">
    <path d="M10 8V4c0-1 1-2 2-2h22c1 0 2 1 2 2v4" fill="none" stroke="#2eb9f8" strokeWidth="3.5" />
    <path d="M0 8h46v34c0 4-3 7-7 7H7c-4 0-7-3-7-7z" fill="#15467f" />
    <rect x="13" y="18" width="9" height="9" fill="#f25022" />
    <rect x="24" y="18" width="9" height="9" fill="#7fba00" />
    <rect x="13" y="29" width="9" height="9" fill="#00a4ef" />
    <rect x="24" y="29" width="9" height="9" fill="#ffb900" />
  </svg>
);
const CloudInfo = () => (
  <svg width="34" height="36" viewBox="0 0 34 36">
    <path d="M4 22c-3-8 3-20 13-20 5 0 9 3 11 8" fill="none" stroke="#222" strokeWidth="2.4" />
    <path d="M6 24c-2-8 3-14 10-14 4 0 7 2 8 5L14 30c-4 0-7-2-8-6z" fill="#9a9a9a" />
    <circle cx="24" cy="25" r="10" fill="#0f66b8" />
    <rect x="23" y="24" width="2.5" height="8" fill="#fff" />
    <rect x="23" y="19" width="2.5" height="2.5" fill="#fff" />
  </svg>
);
const DeskIcon = () => (
  <svg width="34" height="38" viewBox="0 0 34 38" fill="none" stroke="#1a1a1a" strokeWidth="2">
    <path d="M24 6H4c-1 0-2 1-2 2v18c0 1 1 2 2 2h22c1 0 2-1 2-2v-4" />
    <path d="M11 28v8M19 28v8M7 36h16" />
    <rect x="24" y="2" width="8" height="20" rx="2" fill="#dbe1ee" />
    <path d="M26 7h4" />
  </svg>
);

const assistantLines = [
  "The 'Ads Now AI' section now appears",
  "immediately after the hero section and",
  "directly before the industry solutions,",
  "creating a more logical and engaging",
];
const promptLines = [
  "remove this box on the /autodealernow ,",
  "/realotnow , and all industry page and replace",
  "with the screeenshot of the home page ne cta",
  "for live demo do this on all page on the site ,",
  "and all calls to action on every site must go to",
  "pop up for call back lik eehty are a lead used",
  "is the global chatbot as well",
];

export default function App() {
  return (
    <Page>
      <Global />
      <TabStrip>
        <TabSearch>
          <ChevronDown size={26} strokeWidth={2.6} />
        </TabSearch>
        <ActiveTab>
          <Favicon>
            <V0Logo w={26} color="#fff" />
          </Favicon>
          <TabTitle $w={332}>CURRENT SuccessNOW AI Website</TabTitle>
          <TabClose>
            <X size={26} strokeWidth={2.2} />
          </TabClose>
        </ActiveTab>
        <PlainTab>
          <TabTitle $w={335} $muted>EverBots | White-Label Conversational AI</TabTitle>
          <TabClose>
            <X size={24} strokeWidth={2.2} />
          </TabClose>
        </PlainTab>
        <TabDivider />
        <NewTab>
          <Plus size={32} strokeWidth={2.2} />
        </NewTab>
        <WindowControls>
          <WindowButton><Minus size={22} strokeWidth={2} /></WindowButton>
          <WindowButton><RestoreIcon /></WindowButton>
          <WindowButton><X size={26} strokeWidth={1.7} /></WindowButton>
        </WindowControls>
      </TabStrip>

      <Toolbar>
        <NavButton><ArrowLeft size={30} strokeWidth={2.2} /></NavButton>
        <NavButton $faint><ArrowRight size={30} strokeWidth={2.2} /></NavButton>
        <NavButton><RotateCw size={28} strokeWidth={2.4} /></NavButton>
        <Omnibox>
          <SiteInfo>
            <TuneIcon />
          </SiteInfo>
          <UrlText>v0.dev/chat/current-success-now-ai-website-YMjvydhxIVL?b=b_MFYrg52UjuP</UrlText>
          <OmniIcons>
            <MonitorDown size={34} strokeWidth={2} />
            <Star size={32} strokeWidth={2} />
          </OmniIcons>
        </Omnibox>
        <ExtensionRow>
          <Dropper />
          <SnowTile><Snow /></SnowTile>
          <PuzzleIcon />
          <ToolbarDivider />
          <ProfileBadge>S</ProfileBadge>
          <EllipsisVertical size={32} strokeWidth={3} color="#45474d" />
        </ExtensionRow>
      </Toolbar>

      <Bookmarks>
        <LayoutGrid size={30} strokeWidth={2.2} color="#45474d" />
        <BookmarkDivider />
        <Bookmark><NLogo />Success Now CRM</Bookmark>
        <Bookmark><HeartLogo />GoDaddy</Bookmark>
        <Bookmark><FolderIcon />Ads</Bookmark>
        <Bookmark><FolderIcon />SalesBot</Bookmark>
        <Bookmark><FolderIcon />WordPress</Bookmark>
        <Bookmark><FolderIcon />HLPT Docs</Bookmark>
        <Bookmark $trim><DocTile><i /><i /><i /></DocTile>Success now.ai Deta...</Bookmark>
        <Bookmark><DocTile><i /><i /><i /></DocTile>Copy of John Potvin...</Bookmark>
        <Bookmark><DocTile><i /><i /><i /></DocTile>John Potvin (Succes...</Bookmark>
        <BookmarkDivider $push />
        <Bookmark $end><FolderIcon />All Bookmarks</Bookmark>
      </Bookmarks>

      <Shell>
        <Header>
          <V0Logo w={56} />
          <Slash $after={29} />
          <OrbAvatar $size={40} />
          <PersonalCrumb>Personal</PersonalCrumb>
          <UpDown $gap={6} size={36} strokeWidth={2} color="#52525b" />
          <Slash $after={22} />
          <Crumb $muted>SuccessNOW AI...</Crumb>
          <UpDown $gap={12} size={36} strokeWidth={2} color="#52525b" />
          <Slash $after={24} />
          <Crumb>CURRENT SuccessNOW AI Website</Crumb>
          <PrivateBadge><Lock size={18} strokeWidth={3} fill="currentColor" />Private</PrivateBadge>
          <HeaderActions>
            <IconBtn><Settings size={36} strokeWidth={2.3} /></IconBtn>
            <IconBtn><GitFork size={36} strokeWidth={2.3} /></IconBtn>
            <IconBtn><GithubMark /><OnlineDot /></IconBtn>
            <TextBtn>Share</TextBtn>
            <PublishBtn>Publish<ChevronDown size={24} strokeWidth={3} /></PublishBtn>
            <OrbAvatar $size={48} />
          </HeaderActions>
        </Header>

        <Workspace>
          <ChatPanel>
            <ChatScroll>
              <AssistantText>
                {assistantLines.map((l) => (
                  <TextLine key={l}>{l}</TextLine>
                ))}
                <TextLine>content flow!<PartyIcon /></TextLine>
              </AssistantText>
              <ActionRow>
                <Copy size={32} strokeWidth={2.2} />
                <RefreshCw size={32} strokeWidth={2.2} />
                <ThumbsUp size={32} strokeWidth={2.2} />
                <ThumbsDown size={32} strokeWidth={2.2} />
              </ActionRow>
              <UserRow>
                <UserAvatar />
                <div>
                  <TextLine>Integrate the 'Get Your Instant AI Demo</TextLine>
                  <TextLine>Now!' CTA box, mirroring the design and</TextLine>
                </div>
              </UserRow>
              <ScrollRail>
                <RailArrow $top={3} />
                <RailThumb />
                <RailArrow $down $top={430} />
              </ScrollRail>
            </ChatScroll>
            <SuggestHead>
              Suggestions
              <X size={24} strokeWidth={3} color="#52525b" />
            </SuggestHead>
            <ChipRow>
              <ChipPrimary>
                <IntegrationStack>
                  <IntegrationDot><ConnectDots /></IntegrationDot>
                  <IntegrationDot><BoltDot /></IntegrationDot>
                  <IntegrationDot><SpiralDot /></IntegrationDot>
                </IntegrationStack>
                Add Integration
              </ChipPrimary>
              <ChipFaded>Test AutoDealer</ChipFaded>
              <ChipNext><ChevronRight size={26} strokeWidth={2.6} /></ChipNext>
            </ChipRow>
            <Composer>
              <ComposerTop>
                <AttachChip>
                  <Thumb />
                  <AttachText>
                    <AttachName>Screen...(1215)....</AttachName>
                    <div>823.08kB</div>
                  </AttachText>
                  <AttachClose><X size={20} strokeWidth={2.2} /></AttachClose>
                </AttachChip>
                <Warning>
                  <TriangleAlert size={30} strokeWidth={2.2} />
                  <WarningText>
                    <TextLine>Your message and attachment are close to</TextLine>
                    <TextLine>exceeding the context window for this chat. Try</TextLine>
                    <TextLine>starting a new chat.</TextLine>
                  </WarningText>
                </Warning>
              </ComposerTop>
              <PromptText>
                {promptLines.map((l) => (
                  <TextLine key={l}>{l}</TextLine>
                ))}
              </PromptText>
              <ComposerBar>
                <ModelName>v0-1.5-md</ModelName>
                <ChevronDown size={24} strokeWidth={2.6} color="#52525b" />
                <ComposerTools>
                  <Sparkle />
                  <Paperclip size={32} strokeWidth={2.4} />
                  <SendBtn><ArrowUp size={34} strokeWidth={2.4} /></SendBtn>
                </ComposerTools>
              </ComposerBar>
            </Composer>
            <Disclaimer>v0 may make mistakes. Please use with discretion.</Disclaimer>
          </ChatPanel>

          <PreviewPanel>
            <PreviewTabs>
              <PillTab>Preview</PillTab>
              <QuietTab>Code</QuietTab>
              <PreviewTools>
                <Download size={32} strokeWidth={2.4} />
                <VersionBtn>v71<ChevronDown size={24} strokeWidth={2.8} /></VersionBtn>
              </PreviewTools>
            </PreviewTabs>
            <AddressRow>
              <AddressNav>
                <ChevronLeft size={34} strokeWidth={2.4} />
                <ChevronRight size={34} strokeWidth={2.4} color="#8f8f96" />
                <RefreshCw size={30} strokeWidth={2.2} />
              </AddressNav>
              <AddressField>/</AddressField>
              <AddressTools>
                <MousePointerClick size={32} strokeWidth={2.2} />
                <DuplicateIcon />
                <Maximize size={32} strokeWidth={2.4} />
              </AddressTools>
            </AddressRow>
            <ViewportRow>
              <Viewport>
                <SiteNav>
                  <RocketIcon size={50} />
                  <SiteLogo>SuccessNOW</SiteLogo>
                  <SiteLinks>
                    <SiteLink $current>Home</SiteLink>
                    <SiteLink>Features</SiteLink>
                    <SiteLink>Industries</SiteLink>
                    <SiteLink>Pricing</SiteLink>
                    <SiteLink>Demo</SiteLink>
                  </SiteLinks>
                </SiteNav>
                <HeroSection>
                  <HeroCard>
                    <CardDot $corner="tr" $size={24} />
                    <CardDot $corner="bl" $size={16} />
                    <HeroIcons>
                      <Sparkles size={50} strokeWidth={2} />
                      <HeroPlay />
                      <Sparkles size={50} strokeWidth={2} />
                    </HeroIcons>
                    <HeroTitle>
                      <TextLine>Start My Instant Demo</TextLine>
                      <TitleAccent>NOW</TitleAccent>
                    </HeroTitle>
                    <HeroSub>
                      <RocketIcon size={42} />
                      Experience AI That Converts
                    </HeroSub>
                    <HeroBtn>
                      <HeroBtnDot />
                      Click to Begin
                    </HeroBtn>
                  </HeroCard>
                  <HeroCaption>No signup required • Instant access • Live AI demonstration</HeroCaption>
                </HeroSection>
                <LowerSection />
                <ChatFab>
                  <Bot size={30} strokeWidth={2.2} />
                  <FabBadge>1</FabBadge>
                </ChatFab>
              </Viewport>
              <PageScrollbar>
                <PageArrow />
                <PageThumb />
                <PageArrow $down />
              </PageScrollbar>
            </ViewportRow>
            <ConsoleBar>
              <SquareTerminal size={34} strokeWidth={2.2} />
              Console
              <ConsoleExpand><ChevronsUp size={32} strokeWidth={2.4} /></ConsoleExpand>
            </ConsoleBar>
          </PreviewPanel>
        </Workspace>
      </Shell>

      <Taskbar>
        <Weather>
          <Umbrella />
          <WeatherText>
            <div>Rainy days ahead</div>
            <div>27°C</div>
          </WeatherText>
        </Weather>
        <WinLogo />
        <SearchBox><SearchSpark />Search</SearchBox>
        <TaskView><TaskViewIcon /></TaskView>
        <TaskSlot><CopilotPre /></TaskSlot>
        <TaskSlot><CopilotIcon /></TaskSlot>
        <TaskSlot><ExplorerIcon /></TaskSlot>
        <TaskSlot><EdgeIcon /></TaskSlot>
        <TaskSlot><StoreIcon /></TaskSlot>
        <TaskSlot>
          <ChromeLogo />
          <ProfilePip $bg="#7b1fa2">J</ProfilePip>
          <RunPip />
        </TaskSlot>
        <TaskSlot $active>
          <ChromeLogo />
          <ProfilePip $bg="#5b4037">S</ProfilePip>
          <RunPip $active />
        </TaskSlot>
        <Tray>
          <ChevronUp size={30} strokeWidth={2} />
          <TrayIcon $ml={34}><CloudInfo /></TrayIcon>
          <TrayLang><div>ENG</div><div>US</div></TrayLang>
          <TrayIcon $ml={34}><DeskIcon /></TrayIcon>
          <TrayIcon $ml={17}><VolumeX size={32} strokeWidth={1.8} /></TrayIcon>
          <TrayIcon $ml={11}><BatteryCharging size={36} strokeWidth={1.8} /></TrayIcon>
          <TrayClock><div>7:54 AM</div><div>2025-06-07</div></TrayClock>
        </Tray>
      </Taskbar>
    </Page>
  );
}
